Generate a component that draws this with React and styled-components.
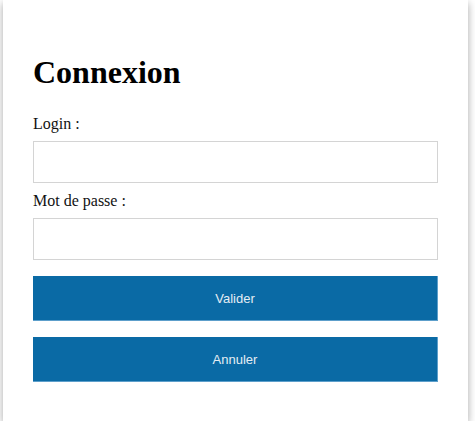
import React from "react";
import styled, { createGlobalStyle } from "styled-components";

const Global = createGlobalStyle`
  html, body { margin: 0; padding: 0; background: #ffffff; }
  body { font-family: "Liberation Serif", "Times New Roman", serif; }
`;

const Card = styled.div`
  box-sizing: border-box;
  width: 465px;
  margin-left: 3px;
  padding: 54px 30px 39px;
  background: #ffffff;
  box-shadow: 0 3px 8px rgba(0, 0, 0, 0.35);
  display: flex;
  flex-direction: column;
`;

const Title = styled.h1`
  margin: 0 0 23px;
  font-family: "Liberation Serif", "Times New Roman", serif;
  font-size: 32px;
  font-weight: bold;
  line-height: 37px;
  color: #000;
`;

const Label = styled.label`
  display: block;
  font-family: "Liberation Serif", "Times New Roman", serif;
  font-size: 16px;
  line-height: 19px;
  color: #111;
  margin-bottom: 8px;
`;

const Input = styled.input`
  box-sizing: border-box;
  width: 100%;
  height: 42px;
  margin: 0 0 ${(p) => p.$after}px;
  border: 1px solid #d4d4d4;
  border-radius: 0;
  outline: none;
  background: #fff;
  padding: 0 10px;
  font-size: 16px;
`;

const Button = styled.button`
  box-sizing: border-box;
  width: 100%;
  height: 45px;
  margin: 0 0 ${(p) => p.$after}px;
  background: #0a6aa5;
  border: none;
  border-right: 1px solid #5d9fcb;
  border-bottom: 1px solid #5d9fcb;
  border-radius: 0;
  color: #e4edf4;
  font-family: "Liberation Sans", Arial, sans-serif;
  font-size: 13px;
  cursor: pointer;
`;

export default function App() {
  return (
    <>
      <Global />
      <Card>
        <Title>Connexion</Title>
        <Label htmlFor="login">Login :</Label>
        <Input id="login" type="text" $after={8} />
        <Label htmlFor="pwd">Mot de passe :</Label>
        <Input id="pwd" type="password" $after={16} />
        <Button $after={16}>Valider</Button>
        <Button $after={0}>Annuler</Button>
      </Card>
    </>
  );
}
